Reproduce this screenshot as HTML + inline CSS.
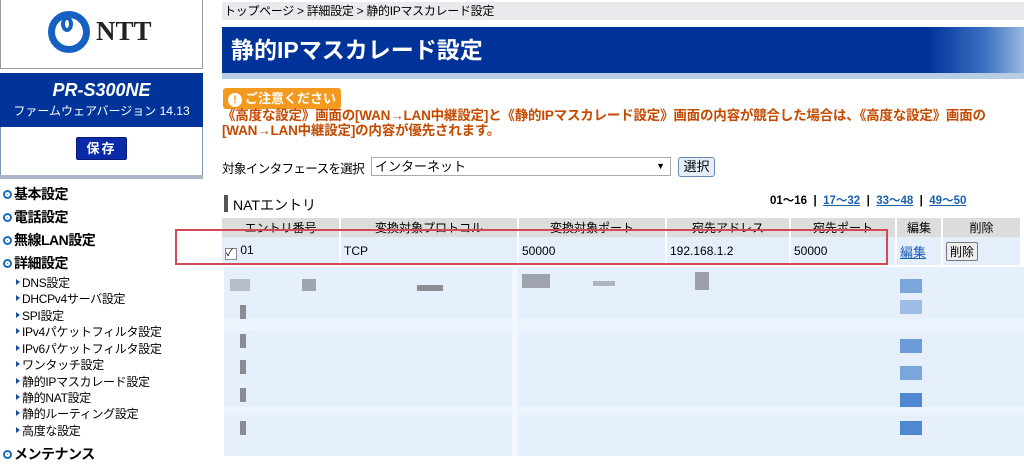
<!DOCTYPE html>
<html><head><meta charset="utf-8"><style>
*{margin:0;padding:0;box-sizing:border-box}
body{width:1024px;height:456px;overflow:hidden;background:#fff;font-family:"Liberation Sans","Noto Sans CJK JP",sans-serif;position:relative;color:#000}
.a{position:absolute}
.menu{font-size:14px;font-weight:bold;left:3px;letter-spacing:-0.5px}
.menu:before{content:"";display:inline-block;width:9px;height:9px;background:#1a6fc0;border-radius:50%;margin-right:2px;vertical-align:0px;box-shadow:inset 0 0 0 2px #1a6fc0,inset 0 0 0 4px #fff}
.sub{font-size:12px;left:16px;letter-spacing:-0.3px}
.sub:before{content:"";display:inline-block;border-left:4px solid #1a4fa0;border-top:3px solid transparent;border-bottom:3px solid transparent;margin-right:2px;vertical-align:2px}
td{font-size:12px;padding:0 3px;border-right:2px solid #fff}
</style></head><body>
<div class="a" style="left:0;top:0;width:203px;height:69px;border:1px solid #999;border-top:none;background:#fff"></div>
<div class="a" style="left:48px;top:11px;width:42px;height:42px;border-radius:50%;border:7px solid #1560c0"></div>
<div class="a" style="left:61px;top:16px;width:12px;height:16px;border-radius:50%;border:4px solid #1560c0"></div>
<div class="a" style="left:96px;top:16px;font:bold 27px 'Liberation Serif',serif;color:#222">NTT</div>
<div class="a" style="left:0;top:73px;width:203px;height:54px;background:#00349a;color:#fff;text-align:center">
<div style="font:italic bold 18px 'Liberation Sans',sans-serif;margin-top:7px">PR-S300NE</div>
<div style="font-size:12px;margin-top:1px">ファームウェアバージョン 14.13</div></div>
<div class="a" style="left:0;top:127px;width:203px;height:49px;border:1px solid #7d9ab8;border-top:none;background:#fff"></div>
<div class="a" style="left:76px;top:137px;width:51px;height:23px;background:#0a2ba8;border:1px solid #061c70;border-radius:2px;color:#fff;font-size:13px;font-weight:bold;text-align:center;line-height:21px;letter-spacing:2px">保存</div>
<div class="a" style="left:0;top:175px;width:203px;height:4px;background:#a8b6c6"></div>
<div class="a menu" style="top:184px">基本設定</div>
<div class="a menu" style="top:207px">電話設定</div>
<div class="a menu" style="top:230px">無線LAN設定</div>
<div class="a menu" style="top:253px">詳細設定</div>
<div class="a sub" style="top:274px">DNS設定</div>
<div class="a sub" style="top:290px">DHCPv4サーバ設定</div>
<div class="a sub" style="top:307px">SPI設定</div>
<div class="a sub" style="top:323px">IPv4パケットフィルタ設定</div>
<div class="a sub" style="top:340px">IPv6パケットフィルタ設定</div>
<div class="a sub" style="top:356px">ワンタッチ設定</div>
<div class="a sub" style="top:373px">静的IPマスカレード設定</div>
<div class="a sub" style="top:389px">静的NAT設定</div>
<div class="a sub" style="top:405px">静的ルーティング設定</div>
<div class="a sub" style="top:422px">高度な設定</div>
<div class="a menu" style="top:444px">メンテナンス</div>
<div class="a" style="left:222px;top:2px;width:802px;height:18px;background:#e9e9ee;font-size:12px;line-height:18px;padding-left:2px;letter-spacing:-0.3px">トップページ &gt; 詳細設定 &gt; 静的IPマスカレード設定</div>
<div class="a" style="left:222px;top:27px;width:802px;height:46px;background:linear-gradient(90deg,#003399 0%,#003399 88%,#3a6fc0 95%,#9ab8e0 100%);color:#fff;font-size:23px;font-weight:bold;line-height:46px;padding-left:9px">静的IPマスカレード設定</div>
<div class="a" style="left:222px;top:73px;width:802px;height:6px;background:#b8cce4"></div>
<div class="a" style="left:223px;top:88px;width:118px;height:21px;background:#f39a1e;border-radius:3px;color:#fff;font-size:13px;font-weight:bold;line-height:21px;padding-left:5px"><span style="display:inline-block;width:14px;height:14px;border-radius:50%;background:#fff;color:#f39a1e;text-align:center;line-height:14px;font-size:11px;margin-right:3px">!</span>ご注意ください</div>
<div class="a" style="left:222px;top:108px;font-size:13.5px;font-weight:bold;color:#c44a00;line-height:15px;width:800px;letter-spacing:-0.2px">《高度な設定》画面の[WAN→LAN中継設定]と《静的IPマスカレード設定》画面の内容が競合した場合は、《高度な設定》画面の<br>[WAN→LAN中継設定]の内容が優先されます。</div>
<div class="a" style="left:222px;top:158px;font-size:12.5px;letter-spacing:-0.6px">対象インタフェースを選択</div>
<div class="a" style="left:371px;top:157px;width:300px;height:19px;border:1px solid #aaa;font-size:13px;line-height:17px;padding-left:3px">インターネット<span style="position:absolute;right:5px;font-size:9px">▼</span></div>
<div class="a" style="left:678px;top:157px;width:37px;height:20px;border:1px solid #6a8ab0;border-radius:3px;background:#e4eef8;font-size:13px;text-align:center;line-height:18px">選択</div>
<div class="a" style="left:224px;top:195px;width:4px;height:17px;background:#555"></div>
<div class="a" style="left:233px;top:195px;font-size:14px">NATエントリ</div>
<div class="a" style="left:770px;top:192px;font-size:11.5px;font-weight:bold;white-space:pre">01～16  <span style="color:#000">|</span>  <u style="color:#1a5fb0">17～32</u>  |  <u style="color:#1a5fb0">33～48</u>  |  <u style="color:#1a5fb0">49～50</u></div>
<table class="a" style="left:222px;top:218px;width:800px;border-collapse:collapse">
<tr style="background:#dcdcdc;height:19px;text-align:center;font-size:13px"><td style="width:118px">エントリ番号</td><td style="width:178px">変換対象プロトコル</td><td style="width:148px">変換対象ポート</td><td style="width:124px">宛先アドレス</td><td style="width:106px">宛先ポート</td><td style="width:46px">編集</td><td>削除</td></tr>
<tr style="background:#e5eefb;height:28px"><td><span style="display:inline-block;width:12px;height:12px;border:1px solid #888;background:#fff;font-size:10px;line-height:10px;vertical-align:-2px">✓</span> 01</td><td>TCP</td><td>50000</td><td>192.168.1.2</td><td>50000</td><td><u style="color:#1a5fb0;font-size:13px">編集</u></td><td><span style="display:inline-block;border:1px solid #777;border-radius:2px;background:#eee;padding:0 3px;font-size:12px">削除</span></td></tr>
</table>
<div class="a" style="left:175px;top:229px;width:713px;height:36px;border:2px solid #d24a5a"></div>
<div class="a" style="left:224px;top:267px;width:800px;height:189px;background:#e6effc"></div>
<div class="a" style="left:224px;top:319px;width:800px;height:12px;background:#eef4fd"></div>
<div class="a" style="left:224px;top:407px;width:800px;height:7px;background:#eef4fd"></div>
<div class="a" style="left:512px;top:267px;width:6px;height:189px;background:#f2f6fd"></div>
<div class="a" style="left:900px;top:279px;width:22px;height:14px;background:#7aa6dc"></div>
<div class="a" style="left:900px;top:300px;width:22px;height:14px;background:#9dbde6"></div>
<div class="a" style="left:900px;top:339px;width:22px;height:14px;background:#6c9cd8"></div>
<div class="a" style="left:900px;top:366px;width:22px;height:14px;background:#7aa6dc"></div>
<div class="a" style="left:900px;top:393px;width:22px;height:14px;background:#4f88d0"></div>
<div class="a" style="left:900px;top:421px;width:22px;height:14px;background:#4f88d0"></div>
<div class="a" style="left:230px;top:279px;width:20px;height:12px;background:#b8bcc8"></div>
<div class="a" style="left:240px;top:305px;width:6px;height:14px;background:#8a8c94"></div>
<div class="a" style="left:240px;top:334px;width:6px;height:14px;background:#8a8c94"></div>
<div class="a" style="left:240px;top:360px;width:6px;height:14px;background:#8a8c94"></div>
<div class="a" style="left:240px;top:388px;width:6px;height:14px;background:#8a8c94"></div>
<div class="a" style="left:240px;top:421px;width:6px;height:14px;background:#8a8c94"></div>
<div class="a" style="left:302px;top:279px;width:14px;height:12px;background:#a0a4ae"></div>
<div class="a" style="left:417px;top:285px;width:26px;height:6px;background:#8a8c94"></div>
<div class="a" style="left:522px;top:274px;width:28px;height:14px;background:#a0a4ae"></div>
<div class="a" style="left:593px;top:281px;width:22px;height:5px;background:#b0b4bc"></div>
<div class="a" style="left:695px;top:272px;width:14px;height:18px;background:#9ca0aa"></div>
</body></html>
